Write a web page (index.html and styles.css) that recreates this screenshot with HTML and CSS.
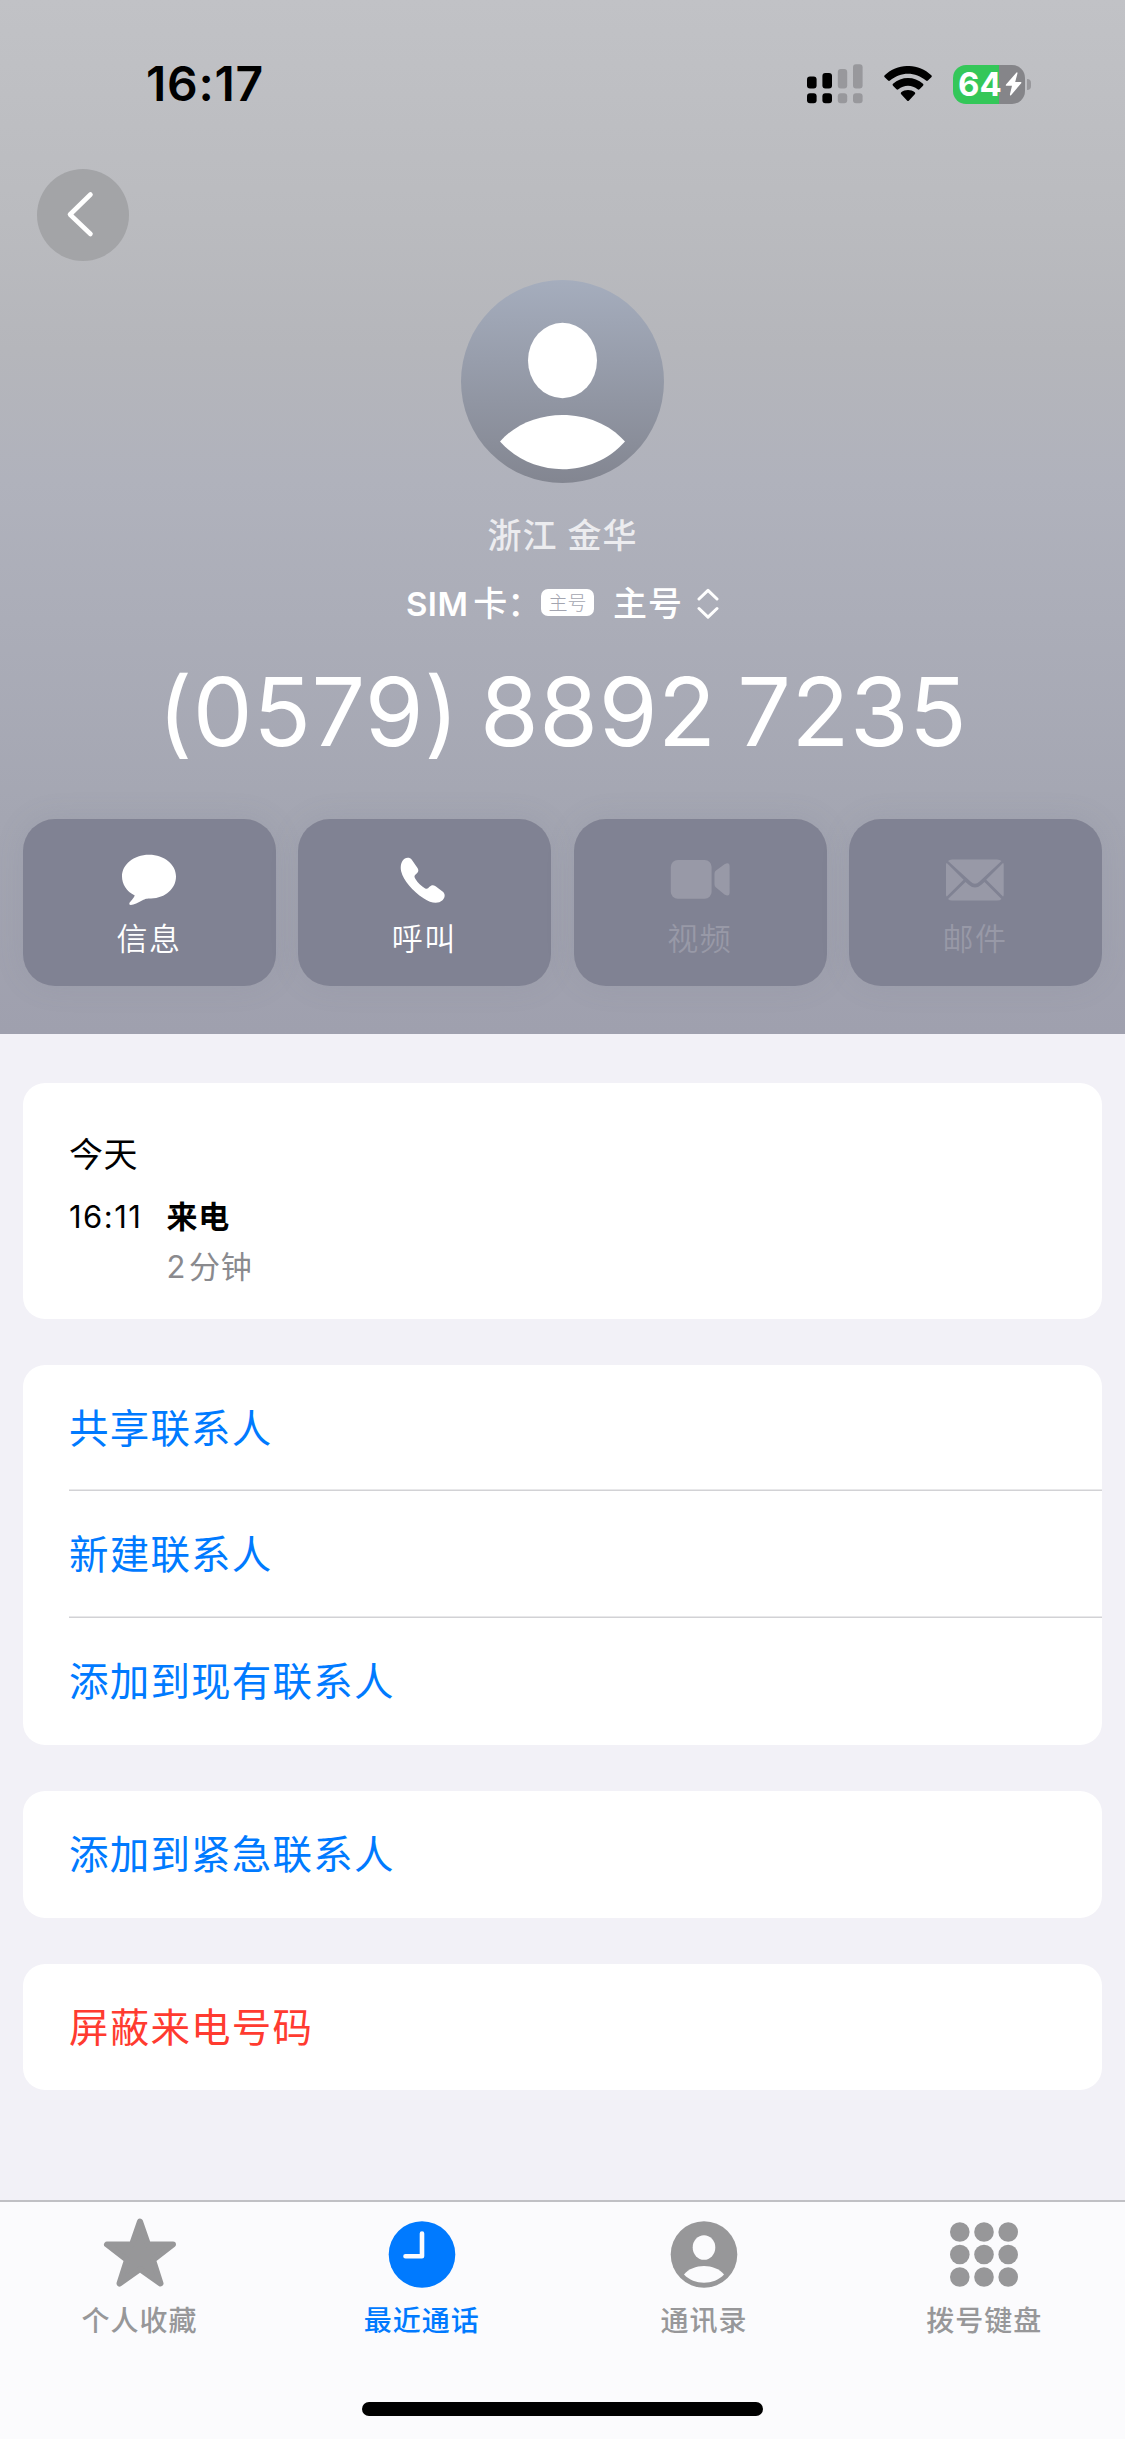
FILE: index.html
```html
<!DOCTYPE html>
<html lang="zh-CN">
<head>
<meta charset="utf-8">
<title>通话详情</title>
<link rel="stylesheet" href="styles.css">
</head>
<body>
<div class="screen">
  <header class="hero">
    <div class="status">
      <span class="status-time">16:17</span>
      <div class="status-icons">
        <svg class="signal" width="56" height="40" viewBox="0 0 56 40">
          <g fill="#000"><rect x="0" y="12.5" width="9.6" height="12" rx="3"/><rect x="15.4" y="9" width="9.6" height="15.5" rx="3"/><rect x="0" y="29.3" width="9.6" height="10" rx="3"/><rect x="15.4" y="29.3" width="9.6" height="10" rx="3"/></g>
          <g fill="#98989c"><rect x="30.8" y="5" width="9.4" height="19.5" rx="3"/><rect x="46" y="0.2" width="9.6" height="24.3" rx="3"/><rect x="30.8" y="29.3" width="9.4" height="10" rx="3"/><rect x="46" y="29.3" width="9.6" height="10" rx="3"/></g>
        </svg>
        <svg class="wifi" width="48" height="36" viewBox="0 0 48 36">
          <path d="M0.7 9.2C14-3.1 34-3.1 47.3 9.2Q48.3 10.2 47.3 11.2L43.9 14.6Q43 15.5 42 14.6C31.600 5.300 16.400 5.300 6 14.600Q5 15.500 4.100 14.600L.7 11.200Q-.3 10.200.7 9.200Z"/>
          <path d="M9 17.800C17.500 10 30.500 10 39 17.800Q40 18.800 39 19.800L35.500 23.200Q34.600 24.100 33.600 23.200C28.200 18.500 19.800 18.500 14.400 23.200Q13.400 24.100 12.500 23.200L9 19.800Q8 18.800 9 17.800Z"/>
          <path d="M17.200 26.300C21 23.200 27 23.200 30.800 26.300Q31.800 27.200 30.800 28.200L25 34.400Q24 35.400 23 34.400L17.200 28.200Q16.200 27.200 17.200 26.300Z"/>
        </svg>
        <div class="battery">
          <div class="battery-body"><span class="battery-level">64</span>
            <svg width="17" height="24" viewBox="0 0 17 24"><path d="M11.500.5L1 12.600Q.3 13.800 1.600 13.800H7L4.900 22.600Q4.900 24 6 23.200L16.200 11.200Q16.900 10 15.600 10H10.200L12.500 1.300Q12.500-.2 11.500.5Z" fill="#fff"/></svg>
          </div>
          <div class="battery-tip"></div>
        </div>
      </div>
    </div>
    <nav class="nav">
      <a class="back"><svg width="92" height="92" viewBox="0 0 92 92"><path d="M53.500 25.500L33 45.500L53.500 65" fill="none" stroke="#fff" stroke-width="4.600" stroke-linecap="round" stroke-linejoin="round"/></svg></a>
    </nav>
    <svg class="avatar" width="203" height="203" viewBox="0 0 203 203">
      <defs><linearGradient id="av" x1="0" y1="0" x2="0" y2="1"><stop offset="0" stop-color="#a5adbd"/><stop offset="1" stop-color="#838691"/></linearGradient></defs>
      <circle cx="101.500" cy="101.500" r="101.500" fill="url(#av)"/>
      <ellipse cx="101.500" cy="80.500" rx="34.500" ry="37.700" fill="#fff"/>
      <path d="M39 161.500C70 126 133 126 164 161.500C131 198.500 72 198.500 39 161.500Z" fill="#fff"/>
    </svg>
    <p class="place">浙江 金华</p>
    <div class="sim">
      <span class="sim-label">SIM<span class="sim-card">卡：</span></span>
      <span class="sim-badge">主号</span>
      <span class="sim-name">主号</span>
      <svg width="22" height="32" viewBox="0 0 22 32"><path d="M2 11L11 2.300L20 11M2 20.500L11 29.200L20 20.500" fill="none" stroke="#fff" stroke-width="3" stroke-linecap="round" stroke-linejoin="round"/></svg>
    </div>
    <h1 class="number">(0579) 8892 7235</h1>
    <div class="actions">
      <a class="action">
        <svg width="60" height="52" viewBox="0 0 60 52"><path fill="#fff" d="M30 .7C45.500.7 57 11 57 23.500C57 36 46.500 46.200 32 46.500C27.500 46.500 26.500 46.800 23.500 48.500C19 51.200 15 53.200 11.800 53.400Q9.800 53.300 10.500 51C12.500 48.700 14.500 46.500 15.800 43.500C7.500 39 3 31.500 3 23.500C3 11 14.500.7 30 .7Z" transform="scale(1 .955)"/></svg>
        <span>信息</span>
      </a>
      <a class="action">
        <svg width="60" height="52" viewBox="0 0 60 52"><path fill="#fff" d="M10.500 4.800C12.800 3.300 16 3.300 17.800 5.800L23.500 14C25.200 16.700 24.200 18.600 21.600 20.600C20 21.800 20.300 23 21.300 24.800C23.800 29 27.200 32.300 31.200 34.400C33.200 35.200 34 34.500 35.500 32.800C37.300 30.900 39.200 30.700 41.600 32.200L49.200 38C51.500 40.300 51 43.800 48.500 46.300C44 50.200 37.500 49.600 29.500 44.300C18.500 37 9.500 26.500 7.200 17.500C6 12.400 7.200 7.200 10.500 4.800Z"/></svg>
        <span>呼叫</span>
      </a>
      <a class="action action-off">
        <svg width="60" height="52" viewBox="0 0 60 52"><rect x=".8" y="6" width="40.800" height="38.800" rx="7"/><path d="M44.500 19.500Q44.500 17.800 46 16.600L54.500 10.200Q59.600 7.600 59.600 12.400V38.500Q59.600 43 54.500 40.500L46 33.500Q44.500 32.300 44.500 30.500Z"/></svg>
        <span>视频</span>
      </a>
      <a class="action action-off">
        <svg width="60" height="52" viewBox="0 0 60 52"><path d="M3 7Q4.500 5.500 7 5.500H52Q55 5.500 56.500 7L34.500 27.500Q30 32 25.500 27.500Z"/><path d="M3 45Q4.500 46.500 7 46.500H52Q55 46.500 56.500 45L39.500 28L36 31Q30 36 24 31L20.500 28Z"/><path d="M1 11Q1 9 1.800 9L18.600 25.700L1.800 42.500Q1 42.500 1 40.500ZM58.700 11Q58.700 9 58 9L41.200 25.700L58 42.500Q58.700 42.500 58.700 40.500Z"/></svg>
        <span>邮件</span>
      </a>
    </div>
  </header>

  <main class="content">
    <section class="card log">
      <h2 class="log-day">今天</h2>
      <div class="log-row">
        <span class="log-time">16:11</span>
        <div class="log-info"><span class="log-type">来电</span><span class="log-length">2<span class="log-unit">分钟</span></span></div>
      </div>
    </section>
    <section class="card">
      <a class="row">共享联系人</a>
      <a class="row">新建联系人</a>
      <a class="row">添加到现有联系人</a>
    </section>
    <section class="card"><a class="row">添加到紧急联系人</a></section>
    <section class="card"><a class="row row-danger">屏蔽来电号码</a></section>
  </main>

  <footer class="tabbar">
    <nav class="tabs">
      <a class="tab">
        <svg width="74" height="72" viewBox="0 0 74 72"><path d="M37 5.500L45 28.500H70L50 44L57.500 67.500L37 53L16.500 67.500L24 44L4 28.500H29Z" fill="#979799" stroke="#979799" stroke-width="6" stroke-linejoin="round"/></svg>
        <span>个人收藏</span>
      </a>
      <a class="tab tab-on">
        <svg width="74" height="72" viewBox="0 0 74 72"><circle cx="37" cy="38.500" r="33.300" fill="#007aff"/><path d="M37 17.500V40.200H20.500" fill="none" stroke="#fbfbfd" stroke-width="4.600" stroke-linecap="round" stroke-linejoin="round"/></svg>
        <span>最近通话</span>
      </a>
      <a class="tab">
        <svg width="74" height="72" viewBox="0 0 74 72"><circle cx="37" cy="38.500" r="33.300" fill="#979799"/><ellipse cx="37" cy="31.500" rx="11.300" ry="12.300" fill="#fbfbfd"/><path d="M17 58.500C26 47 48 47 57 58.500C47 69.500 27 69.500 17 58.500Z" fill="#fbfbfd"/></svg>
        <span>通讯录</span>
      </a>
      <a class="tab">
        <svg width="74" height="72" viewBox="0 0 74 72"><g fill="#979799"><circle cx="12.800" cy="16" r="9.800"/><circle cx="37" cy="16" r="9.800"/><circle cx="61.200" cy="16" r="9.800"/><circle cx="12.800" cy="38.500" r="9.800"/><circle cx="37" cy="38.500" r="9.800"/><circle cx="61.200" cy="38.500" r="9.800"/><circle cx="12.800" cy="61" r="9.800"/><circle cx="37" cy="61" r="9.800"/><circle cx="61.200" cy="61" r="9.800"/></g></svg>
        <span>拨号键盘</span>
      </a>
    </nav>
    <div class="home"></div>
  </footer>
</div>
</body>
</html>
```
FILE: styles.css
```css
* { box-sizing: border-box; margin: 0; padding: 0; }
body { font-family: Inter, "Noto Sans CJK SC", sans-serif; background: #f2f1f7; }
svg { display: block; flex: none; }
.screen { width: 1125px; height: 2439px; display: flex; flex-direction: column; overflow: hidden; }

/* header */
.hero {
  height: 1034px; display: flex; flex-direction: column; align-items: center;
  background: linear-gradient(#c1c2c6 0, #babbbf 220px, #b5b6bb 350px, #b0b2bc 480px, #abadb8 620px, #a4a6b2 820px, #9fa0ae 1034px);
  color: #fff;
}
.status { width: 100%; height: 168px; display: flex; align-items: center; justify-content: space-between; padding: 0 94px 0 146px; color: #000; }
.status-time { font-size: 48px; font-weight: 600; letter-spacing: .7px; line-height: 60px; }
.status-icons { display: flex; align-items: center; }
.wifi { margin: 0 21px; }
.battery { display: flex; align-items: center; gap: 2px; }
.battery-body {
  width: 72px; height: 39px; border-radius: 13px; padding-left: 5px;
  display: flex; align-items: center; gap: 3px;
  background: linear-gradient(90deg, #34c759 46px, #858589 46px);
}
.battery-level { color: #fff; font-size: 33px; font-weight: 700; line-height: 39px; letter-spacing: 0; }
.battery-tip { width: 4px; height: 11px; border-radius: 0 5px 5px 0; background: #98989c; }
.nav { width: 100%; padding: 1px 37px 0; }
.back { display: block; width: 92px; height: 92px; border-radius: 50%; background: #a3a4a7; }
.avatar { margin-top: 19px; }
.place { margin-top: 28px; line-height: 50px; font-size: 34px; font-weight: 500; letter-spacing: 1px; color: #ececef; }
.sim { margin-top: 19px; height: 48px; display: flex; align-items: center; font-size: 34px; font-weight: 600; line-height: 48px; }
.sim-label { width: 135px; white-space: nowrap; font-size: 33px; font-weight: 600; letter-spacing: .4px; }
.sim-card { margin-left: 5px; font-weight: 500; font-size: 34px; letter-spacing: 0; }
.sim-badge { width: 53px; height: 27px; margin-top: -4px; border-radius: 7px; background: #fff; color: #a3a5b0; font-size: 19px; font-weight: 300; line-height: 29px; text-align: center; }
.sim-name { margin: 0 14px 0 19px; letter-spacing: 1px; font-weight: 500; }
.number { margin-top: 29px; font-size: 95px; font-weight: 400; line-height: 110px; letter-spacing: .5px; word-spacing: -6.5px; white-space: pre; }
.actions { width: 100%; margin-top: 52px; padding: 0 23px; display: grid; grid-template-columns: repeat(4, 1fr); gap: 22.6px; }
.action {
  height: 167px; border-radius: 32px; background: #808293; box-shadow: 0 0 30px rgba(110, 112, 130, .12);
  display: flex; flex-direction: column; align-items: center; padding: 35px 1px 0 0;
  font-size: 31px; letter-spacing: 1.5px; line-height: 44px;
}
.action span { margin-top: 11px; font-weight: 350; }
.action-off { color: #9899a7; }
.action-off svg { fill: #9899a7; }

/* cards */
.content { flex: 1; padding: 49px 23px 0; display: flex; flex-direction: column; gap: 46px; }
.card { background: #fff; border-radius: 22px; padding-left: 46px; }
.log { height: 235.5px; padding-top: 47px; }
.log-day { font-size: 34px; font-weight: 400; line-height: 50px; letter-spacing: .5px; }
.log-row { display: flex; font-size: 31px; line-height: 50px; margin-top: 12px; }
.log-time { width: 97.5px; letter-spacing: 1.5px; }
.log-info { display: flex; flex-direction: column; letter-spacing: .7px; }
.log-type { font-weight: 600; }
.log-length { color: #8a8a8e; }
.log-unit { margin-left: 3px; }
.row { display: block; height: 126.8px; line-height: 129px; font-size: 39.5px; letter-spacing: 1.2px; color: #007aff; }
.row + .row { box-shadow: 0 -1.5px #d2d2d5; }
.row-danger { color: #ff3b30; }

/* tab bar */
.tabbar { height: 239px; border-top: 2px solid #c0c0c4; background: #fbfbfd; display: flex; flex-direction: column; align-items: center; }
.tabs { width: 100%; display: grid; grid-template-columns: 279fr 285.4fr 279.2fr 281.4fr; }
.tab { display: flex; flex-direction: column; align-items: center; padding-top: 14px; color: #979799; font-size: 28px; line-height: 40px; letter-spacing: 1px; }
.tab span { margin-top: 13px; font-weight: 500; }
.tab-on { color: #007aff; }
.home { width: 401px; height: 14px; border-radius: 7px; background: #000; margin-top: 61px; }
```
